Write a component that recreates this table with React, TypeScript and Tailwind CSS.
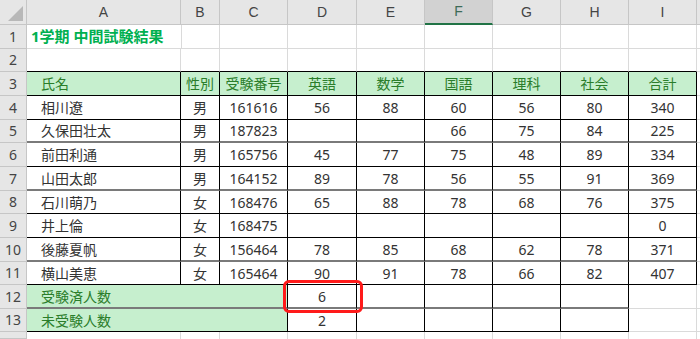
import React from 'react';

const colLetters = ['A', 'B', 'C', 'D', 'E', 'F', 'G', 'H', 'I'];
const colW = ['w-[154px]', 'w-[39px]', 'w-[68px]', 'w-[69px]', 'w-[68px]', 'w-[68px]', 'w-[68px]', 'w-[68px]', 'w-[68px]'];
const rowH = ['h-[24px]', 'h-[23px]', 'h-[24px]', 'h-[24px]', 'h-[23px]', 'h-[24px]', 'h-[24px]', 'h-[23px]', 'h-[24px]', 'h-[24px]', 'h-[23px]', 'h-[24px]', 'h-[23px]', 'h-[7px]'];

const headers = ['氏名', '性別', '受験番号', '英語', '数学', '国語', '理科', '社会', '合計'];

const students: string[][] = [
  ['相川遼', '男', '161616', '56', '88', '60', '56', '80', '340'],
  ['久保田壮太', '男', '187823', '', '', '66', '75', '84', '225'],
  ['前田利通', '男', '165756', '45', '77', '75', '48', '89', '334'],
  ['山田太郎', '男', '164152', '89', '78', '56', '55', '91', '369'],
  ['石川萌乃', '女', '168476', '65', '88', '78', '68', '76', '375'],
  ['井上倫', '女', '168475', '', '', '', '', '', '0'],
  ['後藤夏帆', '女', '156464', '78', '85', '68', '62', '78', '371'],
  ['横山美恵', '女', '165464', '90', '91', '78', '66', '82', '407'],
];

// rows whose bottom line shows as a heavier grey rule
const heavyRows = [5, 7, 10, 12];

const font = 'font-["Noto_Sans","Noto_Sans_CJK_JP",sans-serif]';

const RowHead = ({ n, h }: { n: number | string; h: string }) => (
  <div className={`w-[27px] ${h} shrink-0 bg-[#e6e6e6] border-r border-b border-[#c6c6c6] flex items-center justify-center text-[14px] text-[#444] leading-none overflow-hidden`}>
    {n}
  </div>
);

export default function App() {
  return (
    <div className={`relative w-[700px] h-[339px] overflow-hidden bg-white ${font} text-[14px] text-[#333]`}>
      {/* column headers */}
      <div className="flex h-[25px]">
        <div className="w-[27px] shrink-0 bg-[#e6e6e6] border-r border-b border-[#c6c6c6] flex items-end justify-end pr-[3px] pb-[3px]">
          <svg width="15" height="15" viewBox="0 0 15 15">
            <polygon points="15,0 15,15 0,15" fill="#b8b8b8" />
          </svg>
        </div>
        {colLetters.map((c, i) => (
          <div
            key={c}
            className={`${colW[i]} shrink-0 flex items-center justify-center font-["Liberation_Sans",sans-serif] text-[14px] ${
              c === 'F'
                ? 'bg-[#d2d2d2] border-r border-[#c6c6c6] border-b-2 border-b-[#217346] text-[#3d6b57]'
                : 'bg-[#e6e6e6] border-r border-b border-[#c6c6c6] text-[#444]'
            }`}
          >
            {c}
          </div>
        ))}
        <div className="flex-1 bg-[#e6e6e6] border-b border-[#c6c6c6]" />
      </div>

      {/* row 1: title */}
      <div className="flex">
        <RowHead n={1} h={rowH[0]} />
        <div className={`${colW[0]} ${rowH[0]} shrink-0 border-b border-[#dadada] flex items-center pl-[4px] font-bold text-[15px] text-[#00b050] whitespace-nowrap overflow-visible z-10`}>
          1学期 中間試験結果
        </div>
        {colW.slice(1).map((w, i) => (
          <div key={i} className={`${w} ${rowH[0]} shrink-0 border-r border-b border-[#dadada] ${i === 0 ? 'border-l' : ''}`} />
        ))}
        <div className="flex-1 border-b border-[#dadada]" />
      </div>

      {/* row 2: blank, its bottom is the table's top rule */}
      <div className="flex">
        <RowHead n={2} h={rowH[1]} />
        {colW.map((w, i) => (
          <div key={i} className={`${w} ${rowH[1]} shrink-0 border-r border-[#dadada] border-b border-b-black`} />
        ))}
        <div className="flex-1 border-b border-[#dadada]" />
      </div>

      {/* row 3: headers */}
      <div className="flex">
        <RowHead n={3} h={rowH[2]} />
        {headers.map((t, i) => (
          <div
            key={t}
            className={`${colW[i]} ${rowH[2]} shrink-0 bg-[#c6efce] text-[#2a7d2a] border-r border-b border-black flex items-center ${
              i === 0 ? 'pl-[14px]' : 'justify-center'
            } whitespace-nowrap`}
          >
            {t}
          </div>
        ))}
        <div className="flex-1 border-b border-[#dadada]" />
      </div>

      {/* rows 4-11: students */}
      {students.map((r, ri) => {
        const n = ri + 4;
        const h = rowH[ri + 3];
        const bottom = heavyRows.includes(n) ? 'border-b-2 border-b-[#7a7a7a]' : 'border-b border-b-black';
        return (
          <div key={n} className="flex">
            <RowHead n={n} h={h} />
            {r.map((v, ci) => (
              <div
                key={ci}
                className={`${colW[ci]} ${h} shrink-0 border-r border-r-black ${bottom} flex items-center ${
                  ci === 0 ? 'pl-[14px]' : 'justify-center'
                } whitespace-nowrap`}
              >
                {v}
              </div>
            ))}
            <div className="flex-1 border-b border-[#dadada]" />
          </div>
        );
      })}

      {/* rows 12-13: counts */}
      {[
        { n: 12, label: '受験済人数', value: '6' },
        { n: 13, label: '未受験人数', value: '2' },
      ].map((r, ri) => {
        const h = rowH[11 + ri];
        const bottom = heavyRows.includes(r.n) ? 'border-b-2 border-b-[#7a7a7a]' : 'border-b border-b-black';
        return (
          <div key={r.n} className="flex">
            <RowHead n={r.n} h={h} />
            <div className={`w-[261px] ${h} shrink-0 bg-[#c6efce] text-[#2a7d2a] border-r border-r-black ${bottom} flex items-center pl-[14px]`}>
              {r.label}
            </div>
            <div className={`${colW[3]} ${h} shrink-0 border-r border-r-black ${bottom} flex items-center justify-center`}>
              {r.value}
            </div>
            {colW.slice(4, 8).map((w, i) => (
              <div key={i} className={`${w} ${h} shrink-0 border-r border-r-black ${bottom}`} />
            ))}
            <div className={`${colW[8]} ${h} shrink-0 border-r border-b border-[#dadada]`} />
            <div className="flex-1 border-b border-[#dadada]" />
          </div>
        );
      })}

      {/* row 14 (partial) */}
      <div className="flex">
        <RowHead n="" h={rowH[13]} />
        {colW.map((w, i) => (
          <div key={i} className={`${w} ${rowH[13]} shrink-0 border-r border-[#dadada]`} />
        ))}
      </div>

      {/* highlight around D12 */}
      <div className="absolute left-[283px] top-[280px] w-[80px] h-[33px] border-[3px] border-[#ff1a1a] rounded-[6px] pointer-events-none" />
    </div>
  );
}
